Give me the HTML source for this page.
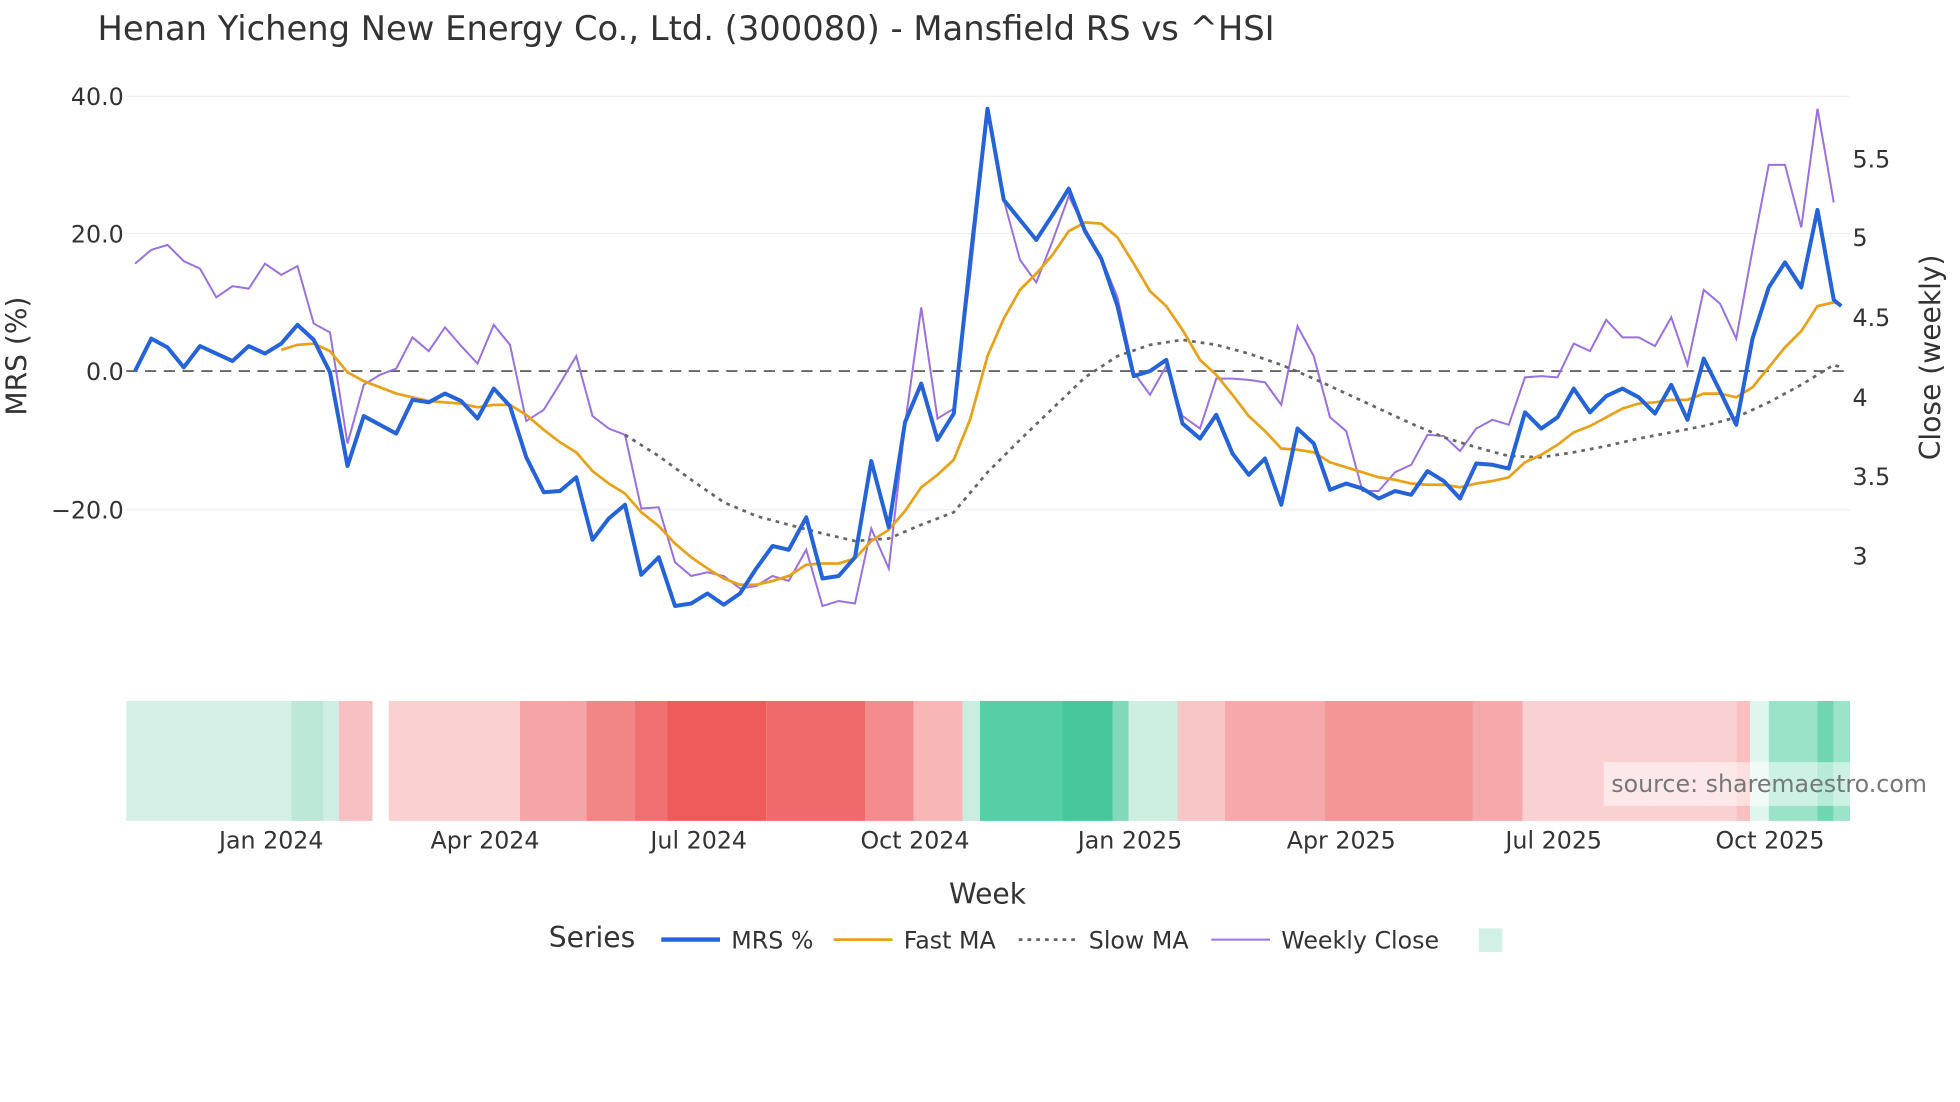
<!DOCTYPE html>
<html><head><meta charset="utf-8"><style>
html,body{margin:0;padding:0;background:#fff;}
svg{display:block;font-family:"DejaVu Sans","Liberation Sans",sans-serif;}
</style></head><body>
<svg width="1960" height="1102" viewBox="0 0 1568 882" preserveAspectRatio="none">
<rect width="1568" height="882" fill="#fff"/>
<text x="78" y="32" font-size="27" fill="#333">Henan Yicheng New Energy Co., Ltd. (300080) - Mansfield RS vs ^HSI</text>
<g stroke="#eceff4" stroke-width="1">
<line x1="101" x2="1480" y1="77" y2="77"/><line x1="101" x2="1480" y1="187" y2="187"/><line x1="101" x2="1480" y1="408" y2="408"/>
</g>
<g font-size="19" fill="#333" text-anchor="end">
<text x="99" y="84">40.0</text><text x="99" y="194">20.0</text><text x="99" y="304">0.0</text><text x="99" y="415">−20.0</text>
</g>
<g font-size="19" fill="#333">
<text x="1482" y="134">5.5</text><text x="1482" y="197">5</text><text x="1482" y="261">4.5</text><text x="1482" y="325">4</text><text x="1482" y="388">3.5</text><text x="1482" y="452">3</text>
</g>
<text transform="translate(21,285) rotate(-90)" font-size="22.5" fill="#333" text-anchor="middle">MRS (%)</text>
<text transform="translate(1552,286) rotate(-90)" font-size="22.5" fill="#333" text-anchor="middle">Close (weekly)</text>
<line x1="101" x2="1480" y1="297" y2="297" stroke="#666" stroke-width="1.5" stroke-dasharray="9,6"/>
<polyline fill="none" stroke="#9b70e0" stroke-width="1.6" points="108,211 121,200 134,196 147,209 160,215 173,238 186,229 199,231 212,211 225,220 238,213 251,259 264,266 278,355 291,308 304,300 317,295 330,270 343,281 356,262 369,277 382,291 395,260 408,276 421,337 435,328 448,307 461,285 474,333 487,343 500,348 513,407 527,406 540,450 553,461 566,458 579,461 592,471 605,469 618,461 631,465 645,440 658,485 671,481 684,483 697,423 711,455 724,340 737,246 750,335 763,327 776,222 790,90 803,160 816,208 829,226 842,193 855,157 868,183 881,206 894,238 907,298 920,316 933,293 946,333 960,343 973,303 986,303 999,304 1012,306 1025,324 1038,261 1051,285 1064,334 1077,345 1090,393 1103,393 1116,378 1129,372 1142,348 1155,349 1168,361 1181,343 1194,336 1207,340 1220,302 1233,301 1246,302 1259,275 1272,281 1285,256 1298,270 1311,270 1324,277 1337,254 1350,292 1363,232 1376,243 1389,271 1402,200 1415,132 1428,132 1441,182 1454,87 1467,162"/>
<polyline fill="none" stroke="#666" stroke-width="2.2" stroke-dasharray="3,4" points="500,348 527,365 553,384 579,402 605,413 631,420 658,427 684,433 711,431 737,420 763,410 790,378 816,352 842,327 868,302 894,285 920,276 946,272 973,276 999,283 1025,292 1051,303 1077,315 1103,327 1129,339 1155,350 1181,358 1207,365 1233,366 1259,362 1285,357 1311,351 1337,346 1363,341 1389,334 1415,322 1441,308 1467,292 1473,294"/>
<polyline fill="none" stroke="#e8a21a" stroke-width="2.2" points="225,280 238,276 251,275 264,281 278,298 291,305 304,310 317,315 330,318 343,321 356,322 369,323 382,326 395,324 408,324 421,332 435,344 448,354 461,362 474,377 487,387 500,395 513,410 527,421 540,435 553,446 566,455 579,463 592,468 605,468 618,465 631,461 645,452 658,451 671,451 684,447 697,433 711,424 724,409 737,390 750,380 763,368 776,336 790,285 803,255 816,232 829,219 842,204 855,185 868,178 881,179 894,190 907,211 920,233 933,245 946,264 960,288 973,300 986,316 999,333 1012,345 1025,359 1038,360 1051,362 1064,370 1077,374 1090,378 1103,382 1116,384 1129,387 1142,388 1155,388 1168,390 1181,387 1194,385 1207,382 1220,370 1233,364 1246,356 1259,346 1272,341 1285,334 1298,327 1311,323 1324,322 1337,320 1350,320 1363,315 1376,315 1389,318 1402,310 1415,294 1428,278 1441,265 1454,245 1467,242 1473,244"/>
<polyline fill="none" stroke="#2563d9" stroke-width="3.2" stroke-linejoin="round" points="108,297 121,271 134,278 147,294 160,277 173,283 186,289 199,277 212,283 225,275 238,260 251,272 264,298 278,373 291,333 304,340 317,347 330,320 343,322 356,315 369,321 382,335 395,311 408,325 421,366 435,394 448,393 461,382 474,432 487,415 500,404 513,460 527,446 540,485 553,483 566,475 579,484 592,475 605,455 618,437 631,440 645,414 658,463 671,461 684,446 697,369 711,422 724,338 737,307 750,352 763,331 776,210 790,87 803,160 816,176 829,192 842,172 855,151 868,185 881,207 894,245 907,301 920,297 933,288 946,339 960,351 973,332 986,363 999,380 1012,367 1025,404 1038,343 1051,355 1064,392 1077,387 1090,391 1103,399 1116,393 1129,396 1142,377 1155,385 1168,399 1181,371 1194,372 1207,375 1220,330 1233,343 1246,334 1259,311 1272,330 1285,317 1298,311 1311,318 1324,331 1337,308 1350,336 1363,287 1376,313 1389,340 1402,271 1415,230 1428,210 1441,230 1454,168 1467,240 1473,245"/>
<g>
<rect x="101" y="561" width="132" height="96" fill="#d2f0e5"/>
<rect x="233" y="561" width="26" height="96" fill="#bde8d7"/>
<rect x="259" y="561" width="12" height="96" fill="#d0efe4"/>
<rect x="271" y="561" width="27" height="96" fill="#f7c0c2"/>
<rect x="311" y="561" width="105" height="96" fill="#fad0d1"/>
<rect x="416" y="561" width="53" height="96" fill="#f5a5a6"/>
<rect x="469" y="561" width="39" height="96" fill="#f28687"/>
<rect x="508" y="561" width="26" height="96" fill="#f07071"/>
<rect x="534" y="561" width="79" height="96" fill="#ef5a5b"/>
<rect x="613" y="561" width="79" height="96" fill="#f06a6b"/>
<rect x="692" y="561" width="39" height="96" fill="#f48b8c"/>
<rect x="731" y="561" width="39" height="96" fill="#f9b6b7"/>
<rect x="770" y="561" width="14" height="96" fill="#c9ede0"/>
<rect x="784" y="561" width="66" height="96" fill="#57cfa6"/>
<rect x="850" y="561" width="40" height="96" fill="#46c89c"/>
<rect x="890" y="561" width="13" height="96" fill="#80d9b9"/>
<rect x="903" y="561" width="39" height="96" fill="#cdefe2"/>
<rect x="942" y="561" width="38" height="96" fill="#f9c6c7"/>
<rect x="980" y="561" width="80" height="96" fill="#f6a9aa"/>
<rect x="1060" y="561" width="118" height="96" fill="#f49596"/>
<rect x="1178" y="561" width="40" height="96" fill="#f6a9aa"/>
<rect x="1218" y="561" width="171" height="96" fill="#fad1d2"/>
<rect x="1389" y="561" width="11" height="96" fill="#f8c0c1"/>
<rect x="1400" y="561" width="15" height="96" fill="#e0f5ee"/>
<rect x="1415" y="561" width="39" height="96" fill="#9ae3c8"/>
<rect x="1454" y="561" width="13" height="96" fill="#6fd6b1"/>
<rect x="1467" y="561" width="13" height="96" fill="#9be3c9"/>
</g>
<rect x="1283" y="610" width="197" height="35" fill="#fff" fill-opacity="0.5"/>
<text x="1289" y="634" font-size="19" fill="#777">source: sharemaestro.com</text>
<g font-size="19" fill="#333" text-anchor="middle">
<text x="217" y="679">Jan 2024</text><text x="388" y="679">Apr 2024</text><text x="559" y="679">Jul 2024</text><text x="732" y="679">Oct 2024</text><text x="904" y="679">Jan 2025</text><text x="1073" y="679">Apr 2025</text><text x="1243" y="679">Jul 2025</text><text x="1416" y="679">Oct 2025</text>
</g>
<text x="790" y="723" font-size="22.5" fill="#333" text-anchor="middle">Week</text>
<text x="439" y="758" font-size="22.5" fill="#333">Series</text>
<line x1="529" x2="576" y1="752" y2="752" stroke="#2563d9" stroke-width="3.5"/>
<text x="585" y="759" font-size="19" fill="#333">MRS %</text>
<line x1="667" x2="714" y1="752" y2="752" stroke="#e8a21a" stroke-width="2.2"/>
<text x="723" y="759" font-size="19" fill="#333">Fast MA</text>
<line x1="815" x2="862" y1="752" y2="752" stroke="#666" stroke-width="2.2" stroke-dasharray="3,4"/>
<text x="871" y="759" font-size="19" fill="#333">Slow MA</text>
<line x1="969" x2="1016" y1="752" y2="752" stroke="#9b70e0" stroke-width="1.6"/>
<text x="1025" y="759" font-size="19" fill="#333">Weekly Close</text>
<rect x="1183" y="743" width="19" height="19" fill="#d2f0e5"/>
</svg>
</body></html>
